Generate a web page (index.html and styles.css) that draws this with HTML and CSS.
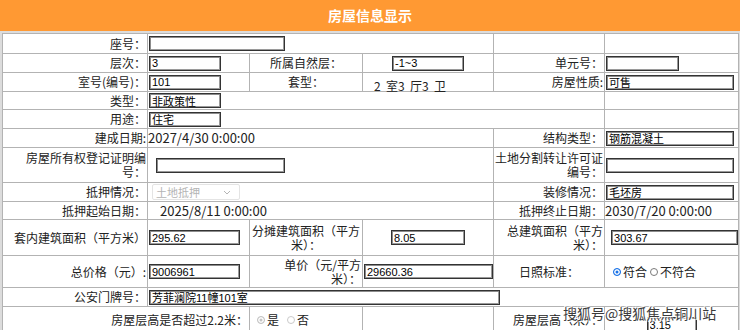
FILE: index.html
```html
<!DOCTYPE html>
<html lang="zh-CN">
<head>
<meta charset="utf-8">
<title>房屋信息显示</title>
<link rel="stylesheet" href="styles.css">
</head>
<body>
<div class="title">房屋信息显示</div>
<div class="frame">
<table class="info">
<colgroup><col class="ca"><col class="cb"><col class="cc"><col class="cd"><col class="ce"><col class="cf"></colgroup>
<tr class="h20">
 <td class="lb">座号：</td>
 <td colspan="3"><input class="ip w136" value=""></td>
 <td></td><td></td>
</tr>
<tr class="h19">
 <td class="lb">层次：</td>
 <td><input class="ip w72" value="3"></td>
 <td class="lc">所属自然层：</td>
 <td><input class="ip w72 mid" value="-1~3"></td>
 <td class="lb">单元号：</td>
 <td><input class="ip w73" value=""></td>
</tr>
<tr class="h19">
 <td class="lb">室号(编号)：</td>
 <td><input class="ip w72" value="101"></td>
 <td class="lc">套型：</td>
 <td class="rooms">2&nbsp; 室3&nbsp; 厅3&nbsp; 卫</td>
 <td class="lb">房屋性质:</td>
 <td><input class="ip w128" value="可售"></td>
</tr>
<tr class="h18">
 <td class="lb">类型：</td>
 <td colspan="4"><input class="ip w72" value="非政策性"></td>
 <td></td>
</tr>
<tr class="h19">
 <td class="lb">用途：</td>
 <td colspan="4"><input class="ip w72" value="住宅"></td>
 <td></td>
</tr>
<tr class="h19">
 <td class="lb">建成日期:</td>
 <td colspan="3" class="val">2027/4/30 0:00:00</td>
 <td class="lb">结构类型：</td>
 <td><input class="ip w128" value="钢筋混凝土"></td>
</tr>
<tr class="h35">
 <td class="lb">房屋所有权登记证明编号：</td>
 <td colspan="3"><input class="ip w129 indent" value=""></td>
 <td class="lb">土地分割转让许可证编号：</td>
 <td><input class="ip w128" value=""></td>
</tr>
<tr class="h19">
 <td class="lb">抵押情况：</td>
 <td colspan="3"><div class="sel"><span>土地抵押</span><svg width="8" height="5" viewBox="0 0 8 5"><path d="M1 1l3 3 3-3" fill="none" stroke="#b5b5b5" stroke-width="1"/></svg></div></td>
 <td class="lb">装修情况：</td>
 <td><input class="ip w128" value="毛坯房"></td>
</tr>
<tr class="h18">
 <td class="lb">抵押起始日期：</td>
 <td colspan="3" class="val pad">2025/8/11 0:00:00</td>
 <td class="lb">抵押终止日期：</td>
 <td class="val">2030/7/20 0:00:00</td>
</tr>
<tr class="h36">
 <td class="lb">套内建筑面积（平方米）</td>
 <td><input class="ip w91" value="295.62"></td>
 <td class="lc">分摊建筑面积（平方米）：</td>
 <td><input class="ip w74 mid" value="8.05"></td>
 <td class="lb">总建筑面积（平方米）：</td>
 <td><input class="ip w127 shift" value="303.67"></td>
</tr>
<tr class="h32">
 <td class="lb">总价格（元）:</td>
 <td><input class="ip w91" value="9006961"></td>
 <td class="lb narrow">单价（元/平方米）：</td>
 <td><input class="ip w129" value="29660.36"></td>
 <td class="lc">日照标准：</td>
 <td class="radios"><label><input type="radio" class="rad" name="sun" checked>符合</label><label><input type="radio" class="rad" name="sun">不符合</label></td>
</tr>
<tr class="h19">
 <td class="lb">公安门牌号：</td>
 <td colspan="5"><input class="ip w351" value="芳菲澜院11幢101室"></td>
</tr>
<tr class="h26">
 <td class="lb" colspan="2">房屋层高是否超过2.2米：</td>
 <td class="radios small"><label><input type="radio" class="rad" name="high" checked disabled>是</label><label><input type="radio" class="rad" name="high" disabled>否</label></td>
 <td></td>
 <td class="lb">房屋层高（米）：</td>
 <td class="low"><input class="ip w50 mid" value="3.15"></td>
</tr>
</table>
</div>
<div class="mark">搜狐号@搜狐焦点铜川站</div>
</body>
</html>
```
FILE: styles.css
```css
html, body {
  margin: 0;
  padding: 0;
  background: #fff;
}
body {
  position: relative;
  width: 740px;
  font-family: "Noto Sans CJK SC", "Noto Sans", sans-serif;
  font-size: 12px;
  color: #222;
}
.title {
  height: 31px;
  line-height: 31px;
  background: #ff9933;
  color: #fff;
  font-weight: bold;
  font-size: 14px;
  text-align: center;
}
.frame {
  border: 2px solid #dcdcdc;
  border-bottom: none;
}
.info {
  width: 736px;
  table-layout: fixed;
  border-collapse: collapse;
}
.ca { width: 145px; }
.cb { width: 102px; }
.cc { width: 113px; }
.cd { width: 131px; }
.ce { width: 111px; }
.cf { width: 134px; }
.info td {
  border: 1px solid #b3b3b3;
  padding: 0 1px;
  line-height: 14px;
  vertical-align: middle;
}
.h18 { height: 18px; }
.h19 { height: 19px; }
.h20 { height: 20px; }
.h26 { height: 26px; }
.h32 { height: 32px; }
.h35 { height: 35px; }
.h36 { height: 36px; }
.info td.lb { text-align: right; }
.info td.lc { text-align: center; }
.info td.narrow { padding-left: 20px; }
.info td.val {
  font-size: 13px;
  padding-left: 0;
}
.info td.pad { padding-left: 12px; }
.info td.rooms {
  vertical-align: bottom;
  line-height: 11px;
  padding-left: 11px;
  white-space: nowrap;
}
.info td.low { vertical-align: bottom; }
.ip {
  display: block;
  box-sizing: border-box;
  height: 15px;
  margin: 0;
  padding: 0 2px;
  border: 1px solid #333;
  box-shadow: inset 1px 1px 0 #8c8c8c, inset -1px -1px 0 #9a9a9a;
  background: #fff;
  font: 11px "Liberation Sans", "Noto Sans CJK SC", sans-serif;
  color: #000;
  outline: none;
}
.ip.mid { margin: 0 auto; }
.ip.indent { margin-left: 7px; }
.ip.shift { margin-left: 5px; }
.w50 { width: 50px; }
.w72 { width: 72px; }
.w73 { width: 73px; }
.w74 { width: 74px; }
.w91 { width: 91px; }
.w127 { width: 127px; }
.w128 { width: 128px; }
.w129 { width: 129px; }
.w136 { width: 136px; }
.w351 { width: 351px; }
.sel {
  box-sizing: border-box;
  width: 88px;
  height: 16px;
  margin-left: 3px;
  padding: 0 8px 0 3px;
  display: flex;
  align-items: center;
  justify-content: space-between;
  border: 1px solid #e4e4e4;
  border-radius: 2px;
  color: #b4b4b4;
  font-size: 11px;
}
.radios {
  white-space: nowrap;
}
.radios label {
  display: inline-flex;
  align-items: center;
  margin-left: 7px;
  font-size: 12px;
}
.radios label + label { margin-left: 3px; }
.radios.small label { margin-left: 6px; }
.radios.small label + label { margin-left: 8px; }
.rad {
  -webkit-appearance: none;
  appearance: none;
  box-sizing: border-box;
  width: 8px;
  height: 8px;
  margin: 0 2px 0 0;
  border: 1px solid #7a7a7a;
  border-radius: 50%;
  background: #fff;
}
.rad:checked {
  border-color: #1a73e8;
  background: #1a73e8;
  box-shadow: inset 0 0 0 1.5px #fff;
}
.rad:disabled { border-color: #cacaca; }
.rad:disabled:checked {
  border-color: #c4c4c4;
  background: #c4c4c4;
}
.mark {
  position: absolute;
  left: 563px;
  top: 303px;
  font-size: 14px;
  color: #3a3a3a;
  white-space: nowrap;
  text-shadow: 0 0 2px #fff, 0 0 1px #fff, 1px 1px 0 #fff, -1px -1px 0 #fff;
}
```
